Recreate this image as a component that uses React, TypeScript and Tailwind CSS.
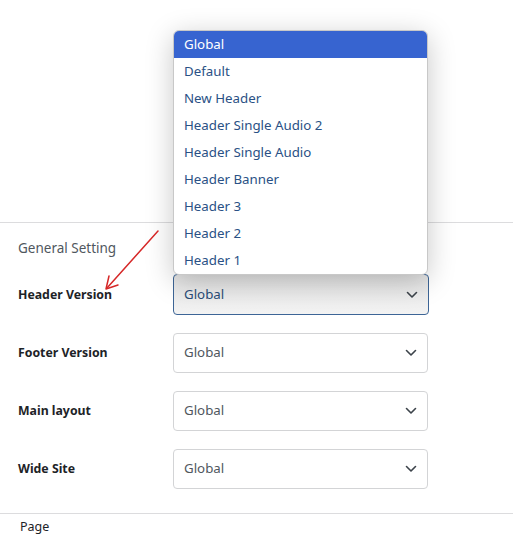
import React from "react";

const options = [
  "Global",
  "Default",
  "New Header",
  "Header Single Audio 2",
  "Header Single Audio",
  "Header Banner",
  "Header 3",
  "Header 2",
  "Header 1",
];

function Chevron() {
  return (
    <svg width="12" height="8" viewBox="0 0 12 8" fill="none" className="shrink-0">
      <path d="M1.5 1.5 6 6l4.5-4.5" stroke="#3c434a" strokeWidth="1.6" strokeLinecap="round" strokeLinejoin="round" />
    </svg>
  );
}

function SelectBox({ focused }: { focused?: boolean }) {
  return (
    <div
      className={
        focused
          ? "flex h-[41px] w-[256px] items-center justify-between rounded-[4px] border border-[#3d6596] bg-gradient-to-b from-[#e4e4e4] to-[#f3f3f3] pl-[10px] pr-[10px] text-[#2a4d78]"
          : "flex h-[40px] w-[255px] items-center justify-between rounded-[4px] border border-[#d3d4d6] bg-white pl-[10px] pr-[10px] text-[#50575e]"
      }
    >
      <span>Global</span>
      <Chevron />
    </div>
  );
}

function Row({ label, focused }: { label: string; focused?: boolean }) {
  return (
    <div className="flex items-center">
      <div className="w-[173px] shrink-0 pl-[18px] text-[12.3px] font-bold text-[#1d2327]">{label}</div>
      <SelectBox focused={focused} />
    </div>
  );
}

export default function App() {
  return (
    <div
      className="relative h-[536px] w-[513px] overflow-hidden bg-white text-[13.3px]"
      style={{ fontFamily: '"Noto Sans", "Open Sans", sans-serif' }}
    >
      <div className="h-[223px] border-b border-[#dcdcde]" />

      <div className="pl-[18px] pt-[15px] text-[13.5px] text-[#50575e]">General Setting</div>

      <div className="mt-[16px] flex flex-col gap-[18px]">
        <Row label="Header Version" focused />
        <Row label="Footer Version" />
        <Row label="Main layout" />
        <Row label="Wide Site" />
      </div>

      <div className="mt-[24px] border-t border-[#dcdcde] pl-[20px] pt-[4px] text-[12.5px] text-[#1d2327]">Page</div>

      {/* open dropdown list */}
      <div className="absolute left-[173px] top-[30px] w-[255px] overflow-hidden rounded-[6px] border border-[#c8c8c8] bg-white shadow-[0_6px_28px_rgba(0,0,0,0.22)]">
        {options.map((o, i) => (
          <div
            key={o}
            className={
              i === 0
                ? "flex h-[27px] items-center bg-[#3764d0] pl-[10px] text-white"
                : "flex h-[27px] items-center pl-[10px] text-[#2a5185]"
            }
          >
            {o}
          </div>
        ))}
      </div>

      {/* red annotation arrow */}
      <svg className="absolute left-0 top-0" width="513" height="536" viewBox="0 0 513 536" fill="none">
        <path d="M158 231 107 288" stroke="#d62828" strokeWidth="1.5" strokeLinecap="round" />
        <path d="M109 276 106 289 118 285" stroke="#d62828" strokeWidth="1.5" strokeLinecap="round" strokeLinejoin="round" />
      </svg>
    </div>
  );
}
